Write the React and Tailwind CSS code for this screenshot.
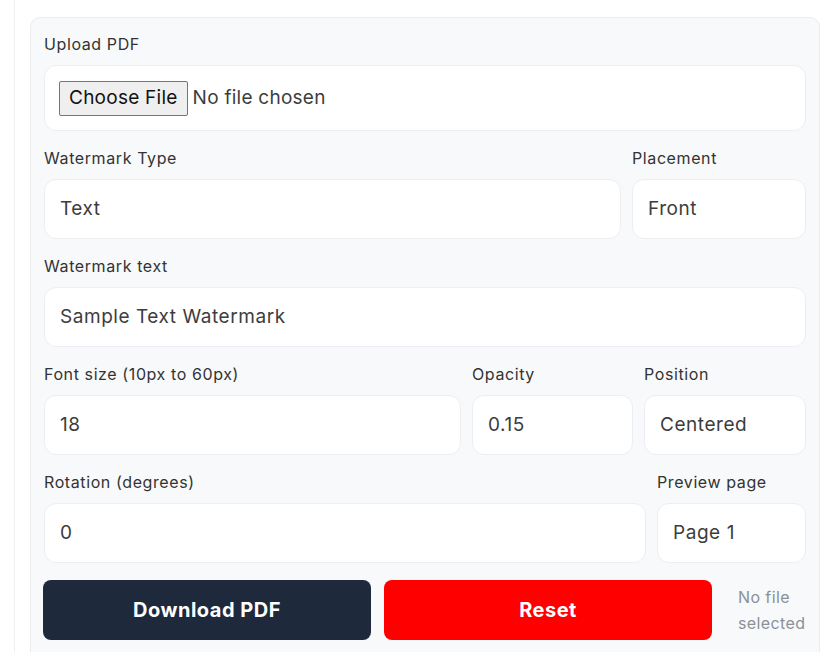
import React from 'react'

const font = {fontFamily: 'Inter, "Noto Sans", sans-serif'}

function Field({label, value, className = ''}){
  return (
    <div className={`flex flex-col ${className}`}>
      <label className="text-[16px] leading-[22px] tracking-[0.6px] text-[#333] mb-[10px] whitespace-nowrap">{label}</label>
      <div className="h-[60px] flex items-center pl-[15px] bg-white border border-[#eceef1] rounded-[12px] text-[19px] tracking-[0.55px] text-[#3d3d3d]">
        {value}
      </div>
    </div>
  )
}

export default function App(){
  return (
    <div className="min-h-[652px] bg-white pl-[14px]" style={font}>
      <div className="min-h-[652px] border-l border-[#eeeff1] pl-[15px] pt-[17px] pr-[7px]">
        <div className="bg-[#f8f9fa] border border-[#eaecef] rounded-[10px] pt-[15px] px-[13px] pb-[20px] w-[790px]">
          <div className="flex flex-col gap-[16px]">
            <div className="flex flex-col">
              <label className="text-[16px] leading-[22px] tracking-[0.6px] text-[#333] mb-[10px]">Upload PDF</label>
              <div className="h-[66px] flex items-center pl-[14px] bg-white border border-[#eceef1] rounded-[12px] text-[19px] tracking-[0.25px] text-[#3d3d3d]">
                <span className="h-[35px] flex items-center px-[9px] bg-[#efefef] border border-[#767676] rounded-[2px] text-[#111]">Choose File</span>
                <span className="ml-[5px]">No file chosen</span>
              </div>
            </div>

            <div className="flex gap-[11px]">
              <Field label="Watermark Type" value="Text" className="flex-1" />
              <Field label="Placement" value="Front" className="w-[174px]" />
            </div>

            <Field label="Watermark text" value="Sample Text Watermark" />

            <div className="flex gap-[11px]">
              <Field label="Font size (10px to 60px)" value="18" className="flex-1" />
              <Field label="Opacity" value="0.15" className="w-[161px]" />
              <Field label="Position" value="Centered" className="w-[162px]" />
            </div>

            <div className="flex gap-[11px]">
              <Field label="Rotation (degrees)" value="0" className="flex-1" />
              <Field label="Preview page" value="Page 1" className="w-[149px]" />
            </div>

            <div className="flex items-center mt-[1px] -ml-[1px]">
              <button className="w-[328px] h-[60px] rounded-[8px] bg-[#1e293b] text-white text-[20px] tracking-[0.5px] font-bold">Download PDF</button>
              <button className="w-[328px] h-[60px] ml-[13px] rounded-[8px] bg-[#fe0000] text-white text-[20px] tracking-[0.5px] font-bold">Reset</button>
              <span className="ml-[26px] text-[16px] leading-[26px] tracking-[0.4px] text-[#8b9098]">No file<br />selected</span>
            </div>
          </div>
        </div>
      </div>
    </div>
  )
}
